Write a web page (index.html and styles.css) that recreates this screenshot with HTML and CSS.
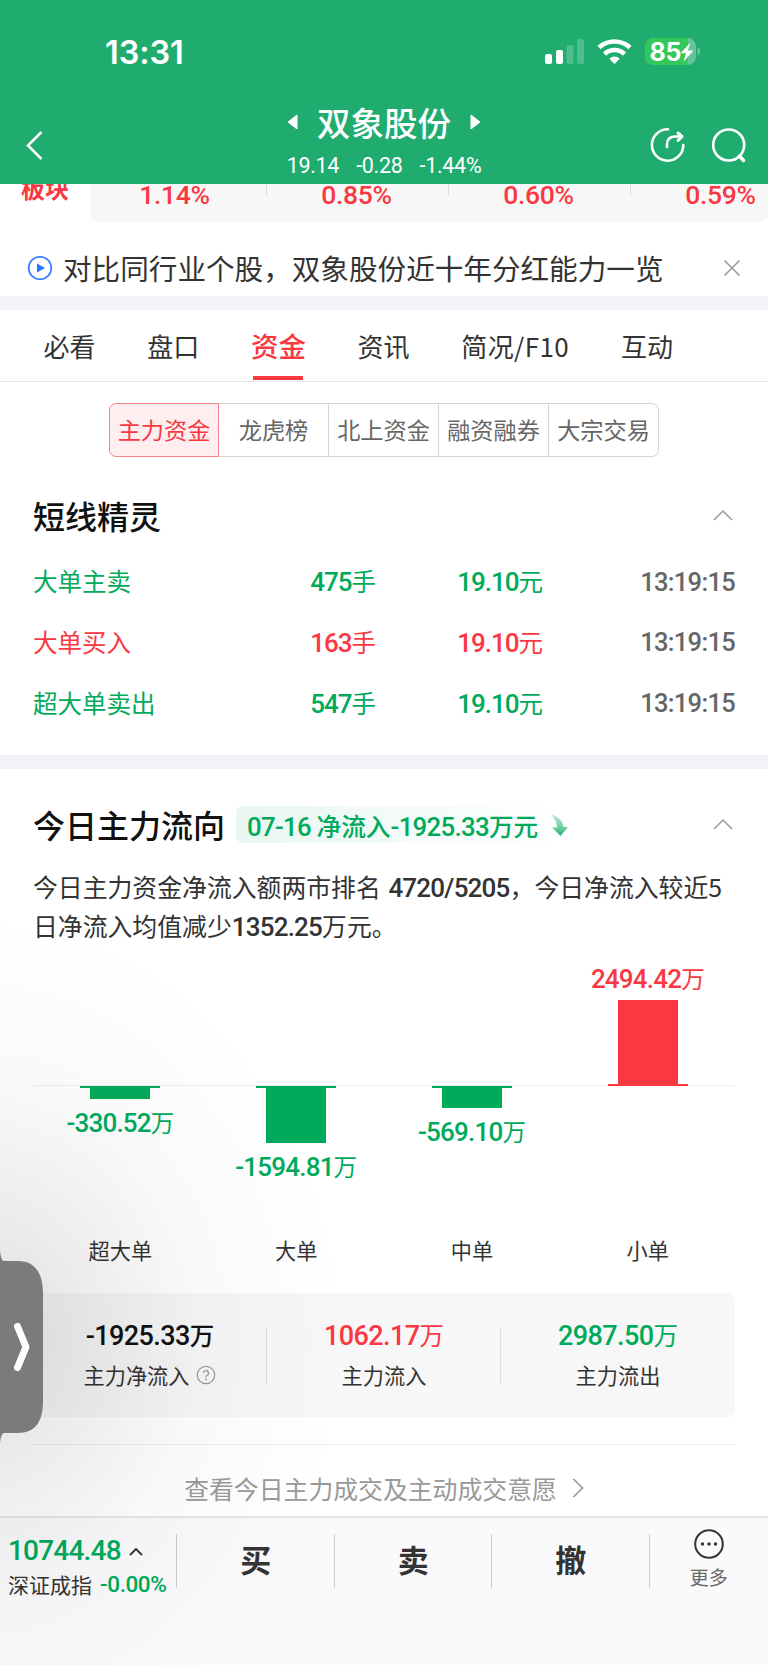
FILE: index.html
```html
<!DOCTYPE html>
<html lang="zh-CN">
<head>
<meta charset="utf-8">
<title>双象股份</title>
<link rel="stylesheet" href="styles.css">
</head>
<body>
<div class="app">
  <header class="header">
    <div class="status">
      <span class="time">13:31</span>
      <svg class="status-icons" width="160" height="32" viewBox="540 36 160 32">
        <g fill="#fff"><rect x="545" y="54" width="7" height="10" rx="2"/><rect x="556" y="50" width="7" height="14" rx="2"/>
        <g opacity=".2"><rect x="566.500" y="45" width="7" height="19" rx="2"/><rect x="577" y="39" width="7" height="25" rx="2"/></g></g>
        <g fill="none" stroke="#fff" stroke-width="4.600"><path d="M599 47.500a23 23 0 0 1 31 0"/><path d="M604.500 54a14.500 14.500 0 0 1 20 0"/></g>
        <path d="M609.300 58.700a7.500 7.500 0 0 1 10.400 0L614.500 64z" fill="#fff"/>
        <clipPath id="cell"><rect x="645" y="38" width="51" height="27" rx="8.500"/></clipPath>
        <g clip-path="url(#cell)"><rect x="645" y="38" width="51" height="27" fill="#65c59a"/><rect x="645" y="38" width="43" height="27" fill="#34c759"/></g>
        <path d="M697.500 47.500c4 1 4 7 0 8z" fill="#65c59a"/>
        <text class="battery" x="649.500" y="60.500" textLength="32">85</text>
        <path d="M690.500 42.500L680.500 53.300h5.500l-2.500 8.500 10-11.300h-5.700z" fill="#fff"/>
      </svg>
    </div>
    <div class="nav">
      <svg class="back" width="20" height="32" viewBox="0 0 20 32"><path d="M16.500 3L3 16.500 16.500 30" fill="none" stroke="#fff" stroke-width="2.600"/></svg>
      <div class="stock">
        <div class="stock-name">
          <svg width="12" height="18" viewBox="0 0 12 18"><path d="M10 2v14L1 9z" fill="#fff" stroke="#fff" stroke-linejoin="round"/></svg>
          <span>双象股份</span>
          <svg width="12" height="18" viewBox="0 0 12 18"><path d="M2 2v14l9-7z" fill="#fff" stroke="#fff" stroke-linejoin="round"/></svg>
        </div>
        <div class="quote"><span>19.14</span><span>-0.28</span><span>-1.44%</span></div>
      </div>
      <svg class="tools" width="100" height="40" viewBox="648 125 100 40">
        <g fill="none" stroke="#fff" stroke-width="2.600" stroke-linecap="round" stroke-linejoin="round">
          <path d="M668 129.300a15.700 15.700 0 1 0 15.300 15.700"/><path d="M667 147v-2.500q0-8 8.500-8H681"/><path d="M678 133l4 3.500-4 4" stroke-width="3"/>
          <circle cx="728.700" cy="145" r="15.500"/><path d="M739.500 156l4 4.500" stroke-width="3.400"/>
        </g>
      </svg>
    </div>
  </header>

  <section class="sectors">
    <b class="sector-title">板块</b>
    <div class="sector-list"><span>1.14%</span><span>0.85%</span><span>0.60%</span><span>0.59%</span></div>
  </section>

  <section class="notice">
    <svg width="26" height="26" viewBox="0 0 26 26"><circle cx="13" cy="13" r="11.300" fill="none" stroke="#2677ff" stroke-width="1.600"/><path d="M10 8.500v9l8-4.500z" fill="#2677ff"/></svg>
    <span class="notice-text">对比同行业个股，双象股份近十年分红能力一览</span>
    <svg class="close" width="18" height="18" viewBox="0 0 18 18"><path d="M1.500 1.500l15 15m0-15l-15 15" stroke="#999" stroke-width="1.500"/></svg>
  </section>

  <nav class="tabs">
    <span>必看</span><span>盘口</span><span class="tab-on">资金</span><span>资讯</span><span class="f10">简况/F10</span><span>互动</span>
  </nav>

  <div class="segments">
    <span class="seg-on">主力资金</span><span>龙虎榜</span><span>北上资金</span><span>融资融券</span><span>大宗交易</span>
  </div>

  <section class="alerts">
    <div class="section-head"><h2>短线精灵</h2><svg class="fold" width="20" height="12" viewBox="0 0 20 12"><path d="M1 11l9-9 9 9" fill="none" stroke="#999" stroke-width="1.500"/></svg></div>
    <div class="row green"><span>大单主卖</span><span class="qty"><i>475</i>手</span><span class="price"><i>19.10</i>元</span><i class="clock">13:19:15</i></div>
    <div class="row red"><span>大单买入</span><span class="qty"><i>163</i>手</span><span class="price"><i>19.10</i>元</span><i class="clock">13:19:15</i></div>
    <div class="row green"><span>超大单卖出</span><span class="qty"><i>547</i>手</span><span class="price"><i>19.10</i>元</span><i class="clock">13:19:15</i></div>
  </section>

  <section class="flow">
    <div class="section-head">
      <h2>今日主力流向</h2>
      <div class="pill"><span><i>07-16</i> 净流入<i>-1925.33</i>万元</span>
        <svg width="18" height="22" viewBox="0 0 18 22"><defs><linearGradient id="dn" x1="0" y1="0" x2="0" y2="1"><stop stop-color="#c9eedc"/><stop offset="1" stop-color="#2bb877"/></linearGradient></defs><path d="M0 0C8 2 13 7 13.500 13H18L10.500 22 2 13.500H7C7 8 4 3 0 0z" fill="url(#dn)"/></svg>
      </div>
      <svg class="fold" width="20" height="12" viewBox="0 0 20 12"><path d="M1 11l9-9 9 9" fill="none" stroke="#999" stroke-width="1.500"/></svg>
    </div>
    <p class="summary">今日主力资金净流入额两市排名 <i class="rank">4720/5205</i>，今日净流入较近5<br>日净流入均值减少<i>1352.25</i>万元。</p>

    <div class="chart">
      <div class="col down"><div class="up-area"></div><div class="down-area"><div class="cap"></div><div class="bar" style="height:11px"></div><span class="val"><i>-330.52</i>万</span></div><span class="cat">超大单</span></div>
      <div class="col down"><div class="up-area"></div><div class="down-area"><div class="cap"></div><div class="bar" style="height:55px"></div><span class="val"><i>-1594.81</i>万</span></div><span class="cat">大单</span></div>
      <div class="col down"><div class="up-area"></div><div class="down-area"><div class="cap"></div><div class="bar" style="height:20px"></div><span class="val"><i>-569.10</i>万</span></div><span class="cat">中单</span></div>
      <div class="col up"><div class="up-area"><span class="val"><i>2494.42</i>万</span><div class="bar" style="height:84px"></div><div class="cap"></div></div><div class="down-area"></div><span class="cat">小单</span></div>
    </div>

    <div class="totals">
      <div><strong class="ink"><i>-1925.33</i>万</strong><span>主力净流入 <svg width="20" height="20" viewBox="0 0 20 20"><circle cx="10" cy="10" r="8.700" fill="none" stroke="#999" stroke-width="1.200"/><path d="M7.500 8a2.500 2.500 0 1 1 3.700 2.200q-1.200.7-1.200 2" fill="none" stroke="#999" stroke-width="1.300"/><circle cx="10" cy="14.500" r=".9" fill="#999"/></svg></span></div>
      <div><strong class="red"><i>1062.17</i>万</strong><span>主力流入</span></div>
      <div><strong class="green"><i>2987.50</i>万</strong><span>主力流出</span></div>
    </div>
    <div class="more-link"><span>查看今日主力成交及主动成交意愿</span><svg width="12" height="20" viewBox="0 0 12 20"><path d="M1.500 1l9 9-9 9" fill="none" stroke="#999" stroke-width="1.700"/></svg></div>
  </section>

  <footer class="bottom">
    <div class="index">
      <div class="index-top"><i class="green">10744.48</i><svg width="14" height="9" viewBox="0 0 14 9"><path d="M1 8l6-6 6 6" fill="none" stroke="#333" stroke-width="1.800"/></svg></div>
      <div class="index-sub"><span>深证成指</span><i class="green">-0.00%</i></div>
    </div>
    <span class="action">买</span><span class="action">卖</span><span class="action">撤</span>
    <div class="more"><svg width="32" height="32" viewBox="0 0 32 32"><circle cx="16" cy="16" r="13.800" fill="none" stroke="#333" stroke-width="2"/><g fill="#333"><circle cx="9.500" cy="16" r="1.700"/><circle cx="16" cy="16" r="1.700"/><circle cx="22.500" cy="16" r="1.700"/></g></svg><span>更多</span></div>
  </footer>

  <div class="shade"></div>
  <svg class="drawer" width="44" height="192" viewBox="0 0 44 192"><path d="M0 0Q1 10 4 10H18C35 10 43 22 43 43V150C43 171 35 182 18 182H4Q1 182 0 192z" fill="#7b7b7b"/><path d="M17.500 75.500L26 96l-8.500 20.500" fill="none" stroke="#fff" stroke-width="7" stroke-linecap="round" stroke-linejoin="round"/></svg>
</div>
</body>
</html>
```
FILE: styles.css
```css
* { box-sizing: border-box; }
body { margin: 0; background: #fff; font-family: "Noto Sans CJK SC", sans-serif; color: #333; }
svg { display: block; flex: none; }
i { font-family: Roboto, sans-serif; font-style: normal; font-weight: 500; line-height: 1; }
.app { position: relative; width: 768px; height: 1665px; overflow: hidden; display: flex; flex-direction: column; white-space: nowrap; }
.green { color: #00aa5b; }
.red { color: #f93842; }
.ink { color: #111; }

.header { height: 184px; flex: none; background: #21ac6f; color: #fff; position: relative; z-index: 1; }
.status { height: 100px; display: flex; justify-content: space-between; padding: 36px 68px 0 105px; }
.time { font: 600 32.500px/33px Inter, sans-serif; letter-spacing: -.1px; }
.battery { font: 700 25px Inter, sans-serif; fill: #fff; }
.nav { height: 84px; display: flex; align-items: flex-start; justify-content: space-between; padding: 0 20px 0 25px; }
.back { margin: 29px 75px 0 0; }
.tools { margin-top: 25px; }
.stock { display: flex; flex-direction: column; align-items: center; }
.stock-name { display: flex; align-items: center; gap: 18px; font-size: 33.500px; line-height: 46px; font-weight: 500; margin-top: -1px; }
.quote { display: flex; gap: 17px; font: 400 21.500px/24px Roboto, sans-serif; margin-top: 9px; letter-spacing: -.3px; }

.sectors { height: 38px; flex: none; display: flex; }
.sector-title { width: 90px; padding-left: 21px; font-size: 24px; line-height: 34px; margin-top: -13px; font-weight: 700; color: #f93842; }
.sector-list { flex: 1; display: grid; grid-template-columns: 177px repeat(3, 182px); background: #f7f7f8; border-radius: 0 0 7px 7px; overflow: hidden; color: #f93842; font: 500 26.500px/22px Roboto, sans-serif; }
.sector-list span { text-align: center; padding-right: 3px; letter-spacing: -.3px; background: linear-gradient(#ddd, #ddd) right top / 1.500px 12px no-repeat; }
.sector-list span:first-child { padding-right: 8px; }

.notice { height: 74px; flex: none; display: flex; align-items: center; padding: 17px 27px 0 26.500px; }
.notice-text { font-size: 28.600px; margin-left: 10.500px; line-height: 40px; }
.close { margin-left: auto; }

.tabs { height: 86px; flex: none; border-top: 14px solid #f2f3f9; border-bottom: 1px solid #e7e7ea; display: flex; padding-left: 43.500px; font-size: 26px; line-height: 71px; gap: 51.700px; }
.tab-on { color: #f93842; font-weight: 500; font-size: 27.500px; height: 70px; background: linear-gradient(#f93842, #f93842) center bottom / 50px 4px no-repeat; }
.tabs .f10 { width: 108px; letter-spacing: .4px; }

.segments { height: 54px; width: 550px; margin: 21px auto 0; flex: none; display: grid; grid-template-columns: repeat(5, 110px); font-size: 23.200px; line-height: 50px; color: #666; text-align: center; }
.segments span { border: 1px solid #d5d5d5; border-left: 0; }
.segments span:last-child { border-radius: 0 7px 7px 0; }
.segments .seg-on { border: 1px solid #f98289; color: #f93842; background: #feeeef; border-radius: 7px 0 0 7px; }

.section-head { display: flex; align-items: center; height: 44px; }
h2 { margin: 0; font-size: 32px; line-height: 44px; font-weight: 500; color: #111; }
.fold { margin-left: auto; }
.alerts { height: 298px; flex: none; padding: 36px 33px 0; }
.alerts .section-head { margin-bottom: 14px; padding-right: 2px; }
.row { display: grid; grid-template-columns: 240px 103px 167px 1fr; align-items: center; height: 60.700px; font-size: 24.500px; line-height: 36px; }
.row i { font-size: 26px; letter-spacing: -1px; }
.qty, .price, .clock { text-align: right; }
.row .clock { color: #666; letter-spacing: -.7px; font-size: 25.500px; padding-top: 2px; }

.flow { height: 761px; flex: none; border-top: 14px solid #f2f3f9; padding: 33px 33px 0; }
.flow .section-head { padding-right: 2px; }
.pill { height: 37px; width: 335px; margin: 1px 0 0 11px; padding-left: 11px; display: flex; align-items: center; gap: 12px; font-size: 24.700px; color: #00aa5b; border-radius: 7px; background: linear-gradient(90deg, #e9f7f0, #fff); font-weight: 500; }
.pill i { font-size: 25.800px; letter-spacing: -.7px; }
.summary { margin: 20.500px 0 0; font-size: 24.850px; line-height: 39.500px; }
.summary i { font-size: 26px; letter-spacing: -.8px; }
.summary .rank { margin-left: 2px; }
.chart { height: 310px; margin: 16.500px -2px 0 -.5px; display: grid; grid-template-columns: repeat(4, 175.800px); background: linear-gradient(#eee, #eee) .5px 123px / 702px 1px no-repeat; }
.col { display: flex; flex-direction: column; align-items: center; }
.up-area { height: 124px; display: flex; flex-direction: column; align-items: center; justify-content: flex-end; }
.down-area { height: 146px; display: flex; flex-direction: column; align-items: center; }
.cap { width: 80px; height: 2px; }
.bar { width: 60px; }
.up .bar, .up .cap { background: #f93842; }
.down .bar, .down .cap { background: #00aa5b; }
.val { font-size: 23.500px; line-height: 32px; color: #00aa5b; margin-top: 7px; }
.val i { font-size: 26px; letter-spacing: -.8px; }
.up .val { color: #f93842; margin: 0 0 6px; }
.cat { font-size: 21.200px; line-height: 36px; }

.totals { height: 124px; display: grid; grid-template-columns: repeat(3, 1fr); padding: 22px 0 0; background: #f7f7f7; border-radius: 8px; margin: 21px 0 0; }
.totals div { display: flex; flex-direction: column; align-items: center; line-height: 40px; font-size: 21.200px; height: 80px; background: linear-gradient(#ddd, #ddd) right 12px / 1px 58px no-repeat; }
.totals div:last-child { background: none; }
.totals strong { font-size: 24.500px; font-weight: 400; }
.totals .ink { font-weight: 500; }
.totals i { font-size: 27px; letter-spacing: -.6px; }
.totals span { display: flex; align-items: center; gap: 7px; }
.more-link { margin-top: 27px; border-top: 1px solid #ececec; height: 72px; display: flex; justify-content: center; align-items: center; gap: 15px; padding-top: 15px; color: #999; font-size: 24.850px; }

.bottom { flex: 1; background: #fafafc; border-top: 2px solid #e6e6e9; display: flex; }
.index { width: 177px; padding: 18px 0 0 8px; background: linear-gradient(#ccc, #ccc) right 16px / 1px 54px no-repeat; }
.index-top { display: flex; align-items: center; gap: 8px; font-size: 28px; line-height: 36px; letter-spacing: -.8px; }
.index-top { height: 30px; }
.index-sub { display: flex; align-items: center; gap: 8px; font-size: 21px; line-height: 28px; margin-top: 4px; }
.index-sub i { font-size: 22.500px; letter-spacing: -.4px; }
.action { width: 157.500px; text-align: center; font-size: 31px; font-weight: 600; line-height: 82px; background: linear-gradient(#ccc, #ccc) right 16px / 1px 54px no-repeat; }
.more { flex: 1; display: flex; flex-direction: column; align-items: center; padding-top: 10px; font-size: 19px; line-height: 34px; color: #666; }

.shade { position: absolute; left: 0; top: 900px; width: 420px; height: 765px; z-index: 2; pointer-events: none; background: radial-gradient(ellipse 370px 430px at -20px 440px, rgba(0,0,0,.13), rgba(0,0,0,.075) 30%, rgba(0,0,0,.024) 60%, rgba(0,0,0,0)); }
.drawer { position: absolute; left: 0; top: 1251px; z-index: 3; }
```
